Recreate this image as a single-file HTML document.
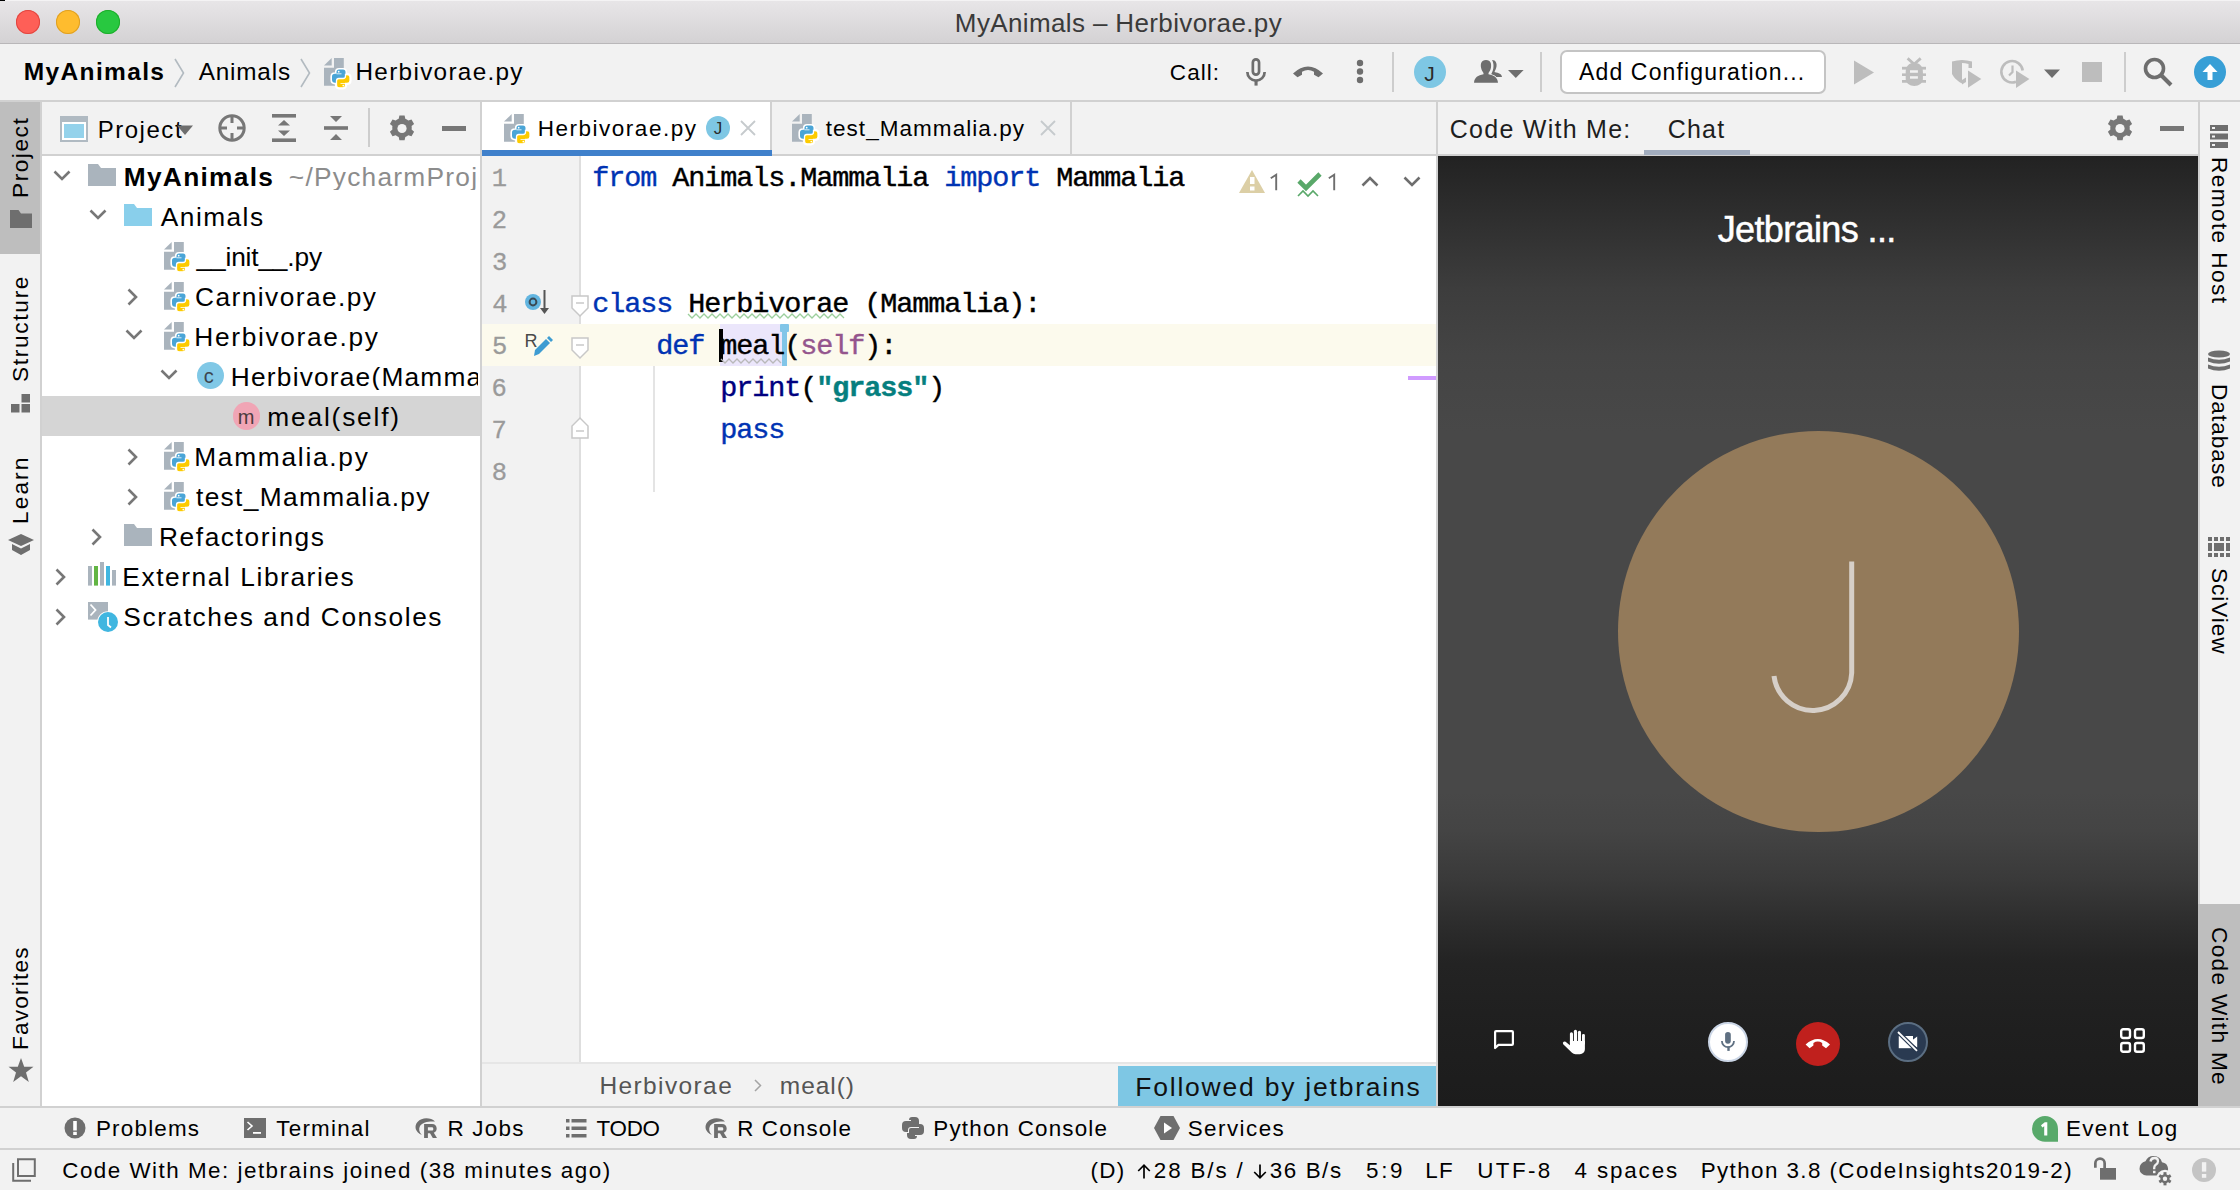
<!DOCTYPE html>
<html><head><meta charset="utf-8"><title>PyCharm</title>
<style>
html,body{margin:0;padding:0;width:2240px;height:1190px;overflow:hidden;background:#f2f2f2}
.r{position:absolute;display:block}
.t{position:absolute;white-space:pre;font-kerning:none;font-feature-settings:"liga" 0}
svg.r{overflow:visible}
</style></head><body>
<div class="r" style="left:0;top:0;width:2240px;height:43px;background:linear-gradient(#e8e6e8,#d4d2d4)"></div>
<div class="r" style="left:0px;top:43px;width:2240px;height:1px;background:#b9b7b9;"></div>
<div class="r" style="left:0px;top:0px;width:2240px;height:1px;background:#f4f3f4;"></div>
<div class="r" style="left:0px;top:0px;width:5px;height:1px;background:#000;"></div>
<div class="r" style="left:16px;top:10px;width:24px;height:24px;border-radius:50%;background:#fe5f57;box-shadow:inset 0 0 0 1px #e14640"></div>
<div class="r" style="left:56px;top:10px;width:24px;height:24px;border-radius:50%;background:#febc2e;box-shadow:inset 0 0 0 1px #dfa023"></div>
<div class="r" style="left:96px;top:10px;width:24px;height:24px;border-radius:50%;background:#28c840;box-shadow:inset 0 0 0 1px #1dad2b"></div>
<div class="t" style="left:954.87px;top:9.69px;font:26px/26px 'Liberation Sans',sans-serif;letter-spacing:0.371px;color:#3a3a3a;">MyAnimals – Herbivorae.py</div>
<div class="r" style="left:0px;top:44px;width:2240px;height:56px;background:#f2f2f2;"></div>
<div class="r" style="left:0px;top:100px;width:2240px;height:2px;background:#d1d1d1;"></div>
<div class="t" style="left:23.76px;top:60.06px;font:bold 24.5px/24.5px 'Liberation Sans',sans-serif;letter-spacing:1.363px;color:#000;">MyAnimals</div>
<svg class="r" style="left:173.5px;top:58px" width="11" height="30" viewBox="0 0 11 30"><path d="M1 1L9.5 15L1 29" fill="none" stroke="#b2bac0" stroke-width="1.6"/></svg>
<div class="t" style="left:198.75px;top:59.93px;font:24.3px/24.3px 'Liberation Sans',sans-serif;letter-spacing:0.817px;color:#000;">Animals</div>
<svg class="r" style="left:299.5px;top:58px" width="11" height="30" viewBox="0 0 11 30"><path d="M1 1L9.5 15L1 29" fill="none" stroke="#b2bac0" stroke-width="1.6"/></svg>
<svg class="r" style="left:324px;top:58px" width="28" height="31" viewBox="0 0 28 31">
<path d="M10 0H19.8V27.8H0V9.8H10Z" fill="#aab4bd"/>
<path d="M0 7.6L7.7 0V7.6Z" fill="#aab4bd"/>
<g transform="translate(8 11.5)">
<path d="M7 0H11Q13.5 0 13.5 2.5V7Q13.5 9.3 11.2 9.3H7Q4.5 9.3 4.5 11.8V13.3H3Q0 13.3 0 10.3V7Q0 4.3 3 4.3H4.5V2.5Q4.5 0 7 0Z" fill="#fff" stroke="#fff" stroke-width="3.2"/><path d="M7 0H11Q13.5 0 13.5 2.5V7Q13.5 9.3 11.2 9.3H7Q4.5 9.3 4.5 11.8V13.3H3Q0 13.3 0 10.3V7Q0 4.3 3 4.3H4.5V2.5Q4.5 0 7 0Z" transform="rotate(180 9 9.15)" fill="#fff" stroke="#fff" stroke-width="3.2"/>
<path d="M7 0H11Q13.5 0 13.5 2.5V7Q13.5 9.3 11.2 9.3H7Q4.5 9.3 4.5 11.8V13.3H3Q0 13.3 0 10.3V7Q0 4.3 3 4.3H4.5V2.5Q4.5 0 7 0Z" fill="#4aa5d7"/><path d="M4.5 4.3H9.5" stroke="#fff" stroke-width="0.8"/>
<path d="M7 0H11Q13.5 0 13.5 2.5V7Q13.5 9.3 11.2 9.3H7Q4.5 9.3 4.5 11.8V13.3H3Q0 13.3 0 10.3V7Q0 4.3 3 4.3H4.5V2.5Q4.5 0 7 0Z" transform="rotate(180 9 9.15)" fill="#fdcb00" stroke="#fff" stroke-width="1.3"/><path d="M8.5 14H13.5" stroke="#fff" stroke-width="0.8"/>
<circle cx="6.7" cy="2.2" r="0.9" fill="#fff"/><circle cx="11.3" cy="16.1" r="0.9" fill="#fff"/>
</g>
</svg>
<div class="t" style="left:355.51px;top:60.23px;font:24.3px/24.3px 'Liberation Sans',sans-serif;letter-spacing:1.314px;color:#000;">Herbivorae.py</div>
<div class="t" style="left:1169.86px;top:61.85px;font:22.5px/22.5px 'Liberation Sans',sans-serif;letter-spacing:1.047px;color:#000;">Call:</div>
<svg class="r" style="left:1244px;top:56px" width="24" height="32" viewBox="0 0 24 32"><rect x="8.85" y="3.35" width="6.2" height="15.3" rx="3.1" fill="none" stroke="#6e6e6e" stroke-width="2.7"/><path d="M3.35 16A8.65 8.65 0 0 0 20.65 16" fill="none" stroke="#6e6e6e" stroke-width="2.7"/><rect x="10.5" y="24" width="3.1" height="5.6" fill="#6e6e6e"/></svg>
<svg class="r" style="left:1292px;top:64px" width="32" height="15" viewBox="0 0 32 15"><path d="M1 9.5Q16 -4.5 31 9.5L26.5 13.2L22 10.7V7.8Q16 4 10 7.8V10.7L5.5 13.2Z" fill="#6e6e6e"/></svg>
<svg class="r" style="left:1354px;top:59px" width="12" height="26" viewBox="0 0 12 26"><circle cx="6" cy="4" r="3.2" fill="#6e6e6e"/><circle cx="6" cy="12.5" r="3.2" fill="#6e6e6e"/><circle cx="6" cy="21" r="3.2" fill="#6e6e6e"/></svg>
<div class="r" style="left:1392px;top:52px;width:2px;height:40px;background:#cdcdcd;"></div>
<div class="r" style="left:1414px;top:56px;width:32px;height:32px;border-radius:50%;background:#7ec7e4"></div>
<div class="t" style="left:1424.17px;top:62.72px;font:21px/21px 'Liberation Sans',sans-serif;letter-spacing:0.000px;color:#2b2b2b;">J</div>
<svg class="r" style="left:1472px;top:58px" width="32" height="27" viewBox="0 0 32 27"><path d="M20 2C24 2 25 5.5 24.5 8.5C24 11 23 12.5 22.5 14C27 15 29.5 16 30 18.9H24C23 17.5 21 17 19 16.5C20.5 14 21.5 11 21.5 8C21.5 5.5 21 3.5 20 2Z" fill="#6e6e6e"/><path d="M14 2C9 2 8.5 6 9 9.5C9.5 12 10.5 13.5 11.5 15L11.5 16.2C6 17.5 2.5 19 2 24.8H26C25.5 19 22 17.5 16.5 16.2V15C17.5 13.5 18.5 12 19 9.5C19.5 6 19 2 14 2Z" fill="#6e6e6e" stroke="#f2f2f2" stroke-width="1.6" paint-order="stroke"/></svg>
<svg class="r" style="left:1507px;top:69px" width="18" height="10" viewBox="0 0 18 10"><path d="M1 1H16.6L8.8 8.9Z" fill="#6e6e6e"/></svg>
<div class="r" style="left:1540px;top:52px;width:2px;height:40px;background:#cdcdcd;"></div>
<div class="r" style="left:1560px;top:50px;width:262px;height:40px;border:2px solid #c4c4c4;border-radius:7px;background:#fff"></div>
<div class="t" style="left:1578.96px;top:60.83px;font:23px/23px 'Liberation Sans',sans-serif;letter-spacing:1.150px;color:#000;">Add Configuration...</div>
<svg class="r" style="left:1853px;top:60px" width="22" height="25" viewBox="0 0 22 25"><path d="M1 0.5L21 12.5L1 24.5Z" fill="#bdbdbd"/></svg>
<svg class="r" style="left:1901px;top:57px" width="26" height="30" viewBox="0 0 26 30"><path d="M6.6 1.4L13 7M19.7 1.4L13.3 7" stroke="#bdbdbd" stroke-width="2.8"/><path d="M13.3 5.8C19 5.8 21.9 10 21.9 15V22C21.9 26 18 28.9 13.3 28.9C8.6 28.9 4.7 26 4.7 22V15C4.7 10 7.6 5.8 13.3 5.8Z" fill="#bdbdbd"/><rect x="1" y="9.8" width="24" height="2.8" fill="#bdbdbd"/><rect x="1" y="16.4" width="24" height="2.6" fill="#bdbdbd"/><rect x="1" y="23" width="24" height="2.75" fill="#bdbdbd"/><rect x="9" y="13.25" width="7.9" height="2.5" fill="#f2f2f2"/><rect x="9" y="19.2" width="7.9" height="2.5" fill="#f2f2f2"/></svg>
<svg class="r" style="left:1951px;top:59px" width="32" height="31" viewBox="0 0 32 31"><path d="M1 2.5Q6 1 11 1V24.5Q4 21 1 15Z" fill="#bdbdbd"/><path d="M11 1Q16 1 21 2.5V9H17.5V5Q14 4 11 4Z" fill="#bdbdbd"/><path d="M11 21L15 18.5V23L11 25.5Z" fill="#bdbdbd"/><path d="M17 11.6L30.3 20L17 28.75Z" fill="#bdbdbd"/></svg>
<svg class="r" style="left:2000px;top:58px" width="31" height="31" viewBox="0 0 31 31"><path d="M16 23.7A10.7 10.7 0 1 1 22.7 12.5" fill="none" stroke="#bdbdbd" stroke-width="2.6"/><path d="M12.5 7.5V14L9 17.5" fill="none" stroke="#bdbdbd" stroke-width="2.2"/><path d="M16 12.6L29.4 21L16 30Z" fill="#bdbdbd"/></svg>
<svg class="r" style="left:2044px;top:69px" width="17" height="10" viewBox="0 0 17 10"><path d="M0 0.5H16L8 9Z" fill="#6e6e6e"/></svg>
<div class="r" style="left:2082px;top:62px;width:20px;height:20px;background:#bdbdbd;"></div>
<div class="r" style="left:2124px;top:52px;width:2px;height:40px;background:#cdcdcd;"></div>
<svg class="r" style="left:2143px;top:57px" width="30" height="30" viewBox="0 0 30 30"><circle cx="11.5" cy="11.5" r="9" fill="none" stroke="#6e6e6e" stroke-width="3.6"/><path d="M18 18L28 28" stroke="#6e6e6e" stroke-width="4"/></svg>
<div class="r" style="left:2194px;top:56px;width:32px;height:32px;border-radius:50%;background:#389fd6"></div>
<svg class="r" style="left:2200px;top:62px" width="20" height="20" viewBox="0 0 20 20"><path d="M10 2L17.5 10H12.5V18H7.5V10H2.5Z" fill="#fff"/></svg>
<div class="r" style="left:0px;top:102px;width:40px;height:1006px;background:#f2f2f2;"></div>
<div class="r" style="left:40px;top:102px;width:2px;height:1006px;background:#d1d1d1;"></div>
<div class="r" style="left:0px;top:102px;width:40px;height:152px;background:#bebebe;"></div>
<div class="t" style="left:8.88px;top:198.16px;font:22.7px/22.7px 'Liberation Sans',sans-serif;letter-spacing:1.513px;color:#000;transform-origin:0 0;transform:rotate(-90deg)">Project</div>
<svg class="r" style="left:10px;top:210px" width="22" height="18" viewBox="0 0 22 18"><path d="M0 0H8.5L11 3.5H22V18H0Z" fill="#6e6e6e"/></svg>
<div class="t" style="left:8.88px;top:382.03px;font:22.7px/22.7px 'Liberation Sans',sans-serif;letter-spacing:1.680px;color:#000;transform-origin:0 0;transform:rotate(-90deg)">Structure</div>
<svg class="r" style="left:11px;top:394px" width="20" height="19" viewBox="0 0 20 19"><rect x="0" y="10" width="8.5" height="8.5" fill="#6e6e6e"/><rect x="10.5" y="10" width="8.5" height="8.5" fill="#6e6e6e"/><rect x="10.5" y="0" width="8.5" height="8.5" fill="#6e6e6e"/></svg>
<div class="t" style="left:8.88px;top:523.86px;font:22.7px/22.7px 'Liberation Sans',sans-serif;letter-spacing:2.070px;color:#000;transform-origin:0 0;transform:rotate(-90deg)">Learn</div>
<svg class="r" style="left:8px;top:534px" width="26" height="21" viewBox="0 0 26 21"><path d="M13 0L26 6L13 12L0 6Z" fill="#6e6e6e"/><path d="M4 10L13 14.5L22 10V16L13 21L4 16Z" fill="#6e6e6e"/></svg>
<div class="t" style="left:8.88px;top:1049.86px;font:22.7px/22.7px 'Liberation Sans',sans-serif;letter-spacing:1.167px;color:#000;transform-origin:0 0;transform:rotate(-90deg)">Favorites</div>
<svg class="r" style="left:8px;top:1058px" width="26" height="25" viewBox="0 0 26 25"><path d="M13 0L16.2 8.8H25.5L18 14.5L20.8 24L13 18.3L5.2 24L8 14.5L0.5 8.8H9.8Z" fill="#6e6e6e"/></svg>
<div class="r" style="left:42px;top:102px;width:438px;height:52px;background:#f2f2f2;"></div>
<div class="r" style="left:42px;top:154px;width:438px;height:2px;background:#d1d1d1;"></div>
<div class="r" style="left:42px;top:156px;width:438px;height:950px;background:#ffffff;"></div>
<div class="r" style="left:480px;top:102px;width:2px;height:1004px;background:#d1d1d1;"></div>
<svg class="r" style="left:60px;top:116px" width="28" height="26" viewBox="0 0 28 26"><rect x="0" y="0" width="28" height="26" fill="#b0bac2"/><rect x="2" y="6" width="24" height="18" fill="#fff"/><rect x="4" y="8" width="20" height="14" fill="#94d2eb"/></svg>
<div class="t" style="left:97.63px;top:117.68px;font:24px/24px 'Liberation Sans',sans-serif;letter-spacing:1.542px;color:#000;">Project</div>
<svg class="r" style="left:177px;top:125px" width="17" height="11" viewBox="0 0 17 11"><path d="M0 0.5H16L8 10Z" fill="#6e6e6e"/></svg>
<svg class="r" style="left:218px;top:114px" width="28" height="28" viewBox="0 0 28 28"><circle cx="14" cy="14" r="12.2" fill="none" stroke="#777" stroke-width="3"/><path d="M14 1V9M14 19V27M1 14H9M19 14H27" stroke="#777" stroke-width="3"/></svg>
<svg class="r" style="left:272px;top:114px" width="24" height="28" viewBox="0 0 24 28"><rect x="0" y="0" width="24" height="3.6" fill="#777"/><rect x="0" y="24.4" width="24" height="3.6" fill="#777"/><path d="M12 6L18 11.5H6Z M12 22L18 16.5H6Z" fill="#777"/></svg>
<svg class="r" style="left:324px;top:116px" width="24" height="24" viewBox="0 0 24 24"><rect x="0" y="10.2" width="24" height="3.6" fill="#777"/><path d="M6 0H18L12 6Z M6 24H18L12 18Z" fill="#777"/></svg>
<div class="r" style="left:368px;top:108px;width:2px;height:39px;background:#cdcdcd;"></div>
<svg class="r" style="left:389px;top:115px" width="26" height="27" viewBox="0 0 26 27"><g transform="translate(13 13.5)"><path d="M-2.6 -13h5.2l0.7 3.3a10 10 0 0 1 3 1.7l3.2-1.1 2.6 4.5-2.5 2.2a10 10 0 0 1 0 3.5l2.5 2.2-2.6 4.5-3.2-1.1a10 10 0 0 1-3 1.7l-0.7 3.3h-5.2l-0.7-3.3a10 10 0 0 1-3-1.7l-3.2 1.1-2.6-4.5 2.5-2.2a10 10 0 0 1 0-3.5l-2.5-2.2 2.6-4.5 3.2 1.1a10 10 0 0 1 3-1.7z" fill="#777"/><circle r="4.6" fill="#f2f2f2"/></g></svg>
<div class="r" style="left:442px;top:126px;width:24px;height:4.5px;background:#777;"></div>
<svg class="r" style="left:52.5px;top:169.5px" width="18" height="11" viewBox="0 0 18 11"><path d="M1.5 1.5L9 9L16.5 1.5" fill="none" stroke="#777" stroke-width="2.6"/></svg>
<svg class="r" style="left:88px;top:164px" width="28" height="22" viewBox="0 0 28 22"><path d="M0 0H10L13 4H28V22H0Z" fill="#aab4bd"/></svg>
<div class="t" style="left:123.74px;top:163.74px;font:bold 26.3px/26.3px 'Liberation Sans',sans-serif;letter-spacing:1.299px;color:#000;">MyAnimals</div>
<div class="t" style="left:288.82px;top:163.74px;font:26.3px/26.3px 'Liberation Sans',sans-serif;letter-spacing:1.250px;color:#8c8c8c;width:190px;overflow:hidden;">~/PycharmProjects/MyAnimals</div>
<svg class="r" style="left:88.5px;top:209px" width="18" height="11" viewBox="0 0 18 11"><path d="M1.5 1.5L9 9L16.5 1.5" fill="none" stroke="#777" stroke-width="2.6"/></svg>
<svg class="r" style="left:124px;top:204px" width="28" height="22" viewBox="0 0 28 22"><path d="M0 0H10L13 4H28V22H0Z" fill="#89cfeb"/></svg>
<div class="t" style="left:160.85px;top:203.74px;font:26.3px/26.3px 'Liberation Sans',sans-serif;letter-spacing:1.444px;color:#000;">Animals</div>
<svg class="r" style="left:164px;top:242px" width="28" height="31" viewBox="0 0 28 31">
<path d="M10 0H19.8V27.8H0V9.8H10Z" fill="#aab4bd"/>
<path d="M0 7.6L7.7 0V7.6Z" fill="#aab4bd"/>
<g transform="translate(8 11.5)">
<path d="M7 0H11Q13.5 0 13.5 2.5V7Q13.5 9.3 11.2 9.3H7Q4.5 9.3 4.5 11.8V13.3H3Q0 13.3 0 10.3V7Q0 4.3 3 4.3H4.5V2.5Q4.5 0 7 0Z" fill="#fff" stroke="#fff" stroke-width="3.2"/><path d="M7 0H11Q13.5 0 13.5 2.5V7Q13.5 9.3 11.2 9.3H7Q4.5 9.3 4.5 11.8V13.3H3Q0 13.3 0 10.3V7Q0 4.3 3 4.3H4.5V2.5Q4.5 0 7 0Z" transform="rotate(180 9 9.15)" fill="#fff" stroke="#fff" stroke-width="3.2"/>
<path d="M7 0H11Q13.5 0 13.5 2.5V7Q13.5 9.3 11.2 9.3H7Q4.5 9.3 4.5 11.8V13.3H3Q0 13.3 0 10.3V7Q0 4.3 3 4.3H4.5V2.5Q4.5 0 7 0Z" fill="#4aa5d7"/><path d="M4.5 4.3H9.5" stroke="#fff" stroke-width="0.8"/>
<path d="M7 0H11Q13.5 0 13.5 2.5V7Q13.5 9.3 11.2 9.3H7Q4.5 9.3 4.5 11.8V13.3H3Q0 13.3 0 10.3V7Q0 4.3 3 4.3H4.5V2.5Q4.5 0 7 0Z" transform="rotate(180 9 9.15)" fill="#fdcb00" stroke="#fff" stroke-width="1.3"/><path d="M8.5 14H13.5" stroke="#fff" stroke-width="0.8"/>
<circle cx="6.7" cy="2.2" r="0.9" fill="#fff"/><circle cx="11.3" cy="16.1" r="0.9" fill="#fff"/>
</g>
</svg>
<div class="t" style="left:196.60px;top:243.74px;font:26.3px/26.3px 'Liberation Sans',sans-serif;letter-spacing:-0.176px;color:#000;">__init__.py</div>
<svg class="r" style="left:126.5px;top:288px" width="11" height="18" viewBox="0 0 11 18"><path d="M1.5 1.5L9 9L1.5 16.5" fill="none" stroke="#777" stroke-width="2.6"/></svg>
<svg class="r" style="left:164px;top:282px" width="28" height="31" viewBox="0 0 28 31">
<path d="M10 0H19.8V27.8H0V9.8H10Z" fill="#aab4bd"/>
<path d="M0 7.6L7.7 0V7.6Z" fill="#aab4bd"/>
<g transform="translate(8 11.5)">
<path d="M7 0H11Q13.5 0 13.5 2.5V7Q13.5 9.3 11.2 9.3H7Q4.5 9.3 4.5 11.8V13.3H3Q0 13.3 0 10.3V7Q0 4.3 3 4.3H4.5V2.5Q4.5 0 7 0Z" fill="#fff" stroke="#fff" stroke-width="3.2"/><path d="M7 0H11Q13.5 0 13.5 2.5V7Q13.5 9.3 11.2 9.3H7Q4.5 9.3 4.5 11.8V13.3H3Q0 13.3 0 10.3V7Q0 4.3 3 4.3H4.5V2.5Q4.5 0 7 0Z" transform="rotate(180 9 9.15)" fill="#fff" stroke="#fff" stroke-width="3.2"/>
<path d="M7 0H11Q13.5 0 13.5 2.5V7Q13.5 9.3 11.2 9.3H7Q4.5 9.3 4.5 11.8V13.3H3Q0 13.3 0 10.3V7Q0 4.3 3 4.3H4.5V2.5Q4.5 0 7 0Z" fill="#4aa5d7"/><path d="M4.5 4.3H9.5" stroke="#fff" stroke-width="0.8"/>
<path d="M7 0H11Q13.5 0 13.5 2.5V7Q13.5 9.3 11.2 9.3H7Q4.5 9.3 4.5 11.8V13.3H3Q0 13.3 0 10.3V7Q0 4.3 3 4.3H4.5V2.5Q4.5 0 7 0Z" transform="rotate(180 9 9.15)" fill="#fdcb00" stroke="#fff" stroke-width="1.3"/><path d="M8.5 14H13.5" stroke="#fff" stroke-width="0.8"/>
<circle cx="6.7" cy="2.2" r="0.9" fill="#fff"/><circle cx="11.3" cy="16.1" r="0.9" fill="#fff"/>
</g>
</svg>
<div class="t" style="left:195.06px;top:283.74px;font:26.3px/26.3px 'Liberation Sans',sans-serif;letter-spacing:1.439px;color:#000;">Carnivorae.py</div>
<svg class="r" style="left:124.5px;top:329px" width="18" height="11" viewBox="0 0 18 11"><path d="M1.5 1.5L9 9L16.5 1.5" fill="none" stroke="#777" stroke-width="2.6"/></svg>
<svg class="r" style="left:164px;top:322px" width="28" height="31" viewBox="0 0 28 31">
<path d="M10 0H19.8V27.8H0V9.8H10Z" fill="#aab4bd"/>
<path d="M0 7.6L7.7 0V7.6Z" fill="#aab4bd"/>
<g transform="translate(8 11.5)">
<path d="M7 0H11Q13.5 0 13.5 2.5V7Q13.5 9.3 11.2 9.3H7Q4.5 9.3 4.5 11.8V13.3H3Q0 13.3 0 10.3V7Q0 4.3 3 4.3H4.5V2.5Q4.5 0 7 0Z" fill="#fff" stroke="#fff" stroke-width="3.2"/><path d="M7 0H11Q13.5 0 13.5 2.5V7Q13.5 9.3 11.2 9.3H7Q4.5 9.3 4.5 11.8V13.3H3Q0 13.3 0 10.3V7Q0 4.3 3 4.3H4.5V2.5Q4.5 0 7 0Z" transform="rotate(180 9 9.15)" fill="#fff" stroke="#fff" stroke-width="3.2"/>
<path d="M7 0H11Q13.5 0 13.5 2.5V7Q13.5 9.3 11.2 9.3H7Q4.5 9.3 4.5 11.8V13.3H3Q0 13.3 0 10.3V7Q0 4.3 3 4.3H4.5V2.5Q4.5 0 7 0Z" fill="#4aa5d7"/><path d="M4.5 4.3H9.5" stroke="#fff" stroke-width="0.8"/>
<path d="M7 0H11Q13.5 0 13.5 2.5V7Q13.5 9.3 11.2 9.3H7Q4.5 9.3 4.5 11.8V13.3H3Q0 13.3 0 10.3V7Q0 4.3 3 4.3H4.5V2.5Q4.5 0 7 0Z" transform="rotate(180 9 9.15)" fill="#fdcb00" stroke="#fff" stroke-width="1.3"/><path d="M8.5 14H13.5" stroke="#fff" stroke-width="0.8"/>
<circle cx="6.7" cy="2.2" r="0.9" fill="#fff"/><circle cx="11.3" cy="16.1" r="0.9" fill="#fff"/>
</g>
</svg>
<div class="t" style="left:194.24px;top:323.74px;font:26.3px/26.3px 'Liberation Sans',sans-serif;letter-spacing:1.674px;color:#000;">Herbivorae.py</div>
<svg class="r" style="left:160px;top:369px" width="18" height="11" viewBox="0 0 18 11"><path d="M1.5 1.5L9 9L16.5 1.5" fill="none" stroke="#777" stroke-width="2.6"/></svg>
<div class="r" style="left:196.5px;top:362px;width:27px;height:27px;border-radius:50%;background:#80c8e6"></div>
<div class="t" style="left:203.65px;top:366.07px;font:20px/20px 'Liberation Sans',sans-serif;letter-spacing:0.000px;color:#3c4750;">c</div>
<div class="t" style="left:230.84px;top:363.74px;font:26.3px/26.3px 'Liberation Sans',sans-serif;letter-spacing:1.200px;color:#000;width:247px;overflow:hidden;">Herbivorae(Mammalia)</div>
<div class="r" style="left:42px;top:396px;width:438px;height:40px;background:#d5d5d5;"></div>
<div class="r" style="left:232.5px;top:402px;width:27.5px;height:27.5px;border-radius:50%;background:#f0a5b5"></div>
<div class="t" style="left:237.67px;top:406.57px;font:20px/20px 'Liberation Sans',sans-serif;letter-spacing:0.000px;color:#4a3a3d;">m</div>
<div class="t" style="left:267.25px;top:403.74px;font:26.3px/26.3px 'Liberation Sans',sans-serif;letter-spacing:1.826px;color:#000;">meal(self)</div>
<svg class="r" style="left:126.5px;top:448px" width="11" height="18" viewBox="0 0 11 18"><path d="M1.5 1.5L9 9L1.5 16.5" fill="none" stroke="#777" stroke-width="2.6"/></svg>
<svg class="r" style="left:164px;top:442px" width="28" height="31" viewBox="0 0 28 31">
<path d="M10 0H19.8V27.8H0V9.8H10Z" fill="#aab4bd"/>
<path d="M0 7.6L7.7 0V7.6Z" fill="#aab4bd"/>
<g transform="translate(8 11.5)">
<path d="M7 0H11Q13.5 0 13.5 2.5V7Q13.5 9.3 11.2 9.3H7Q4.5 9.3 4.5 11.8V13.3H3Q0 13.3 0 10.3V7Q0 4.3 3 4.3H4.5V2.5Q4.5 0 7 0Z" fill="#fff" stroke="#fff" stroke-width="3.2"/><path d="M7 0H11Q13.5 0 13.5 2.5V7Q13.5 9.3 11.2 9.3H7Q4.5 9.3 4.5 11.8V13.3H3Q0 13.3 0 10.3V7Q0 4.3 3 4.3H4.5V2.5Q4.5 0 7 0Z" transform="rotate(180 9 9.15)" fill="#fff" stroke="#fff" stroke-width="3.2"/>
<path d="M7 0H11Q13.5 0 13.5 2.5V7Q13.5 9.3 11.2 9.3H7Q4.5 9.3 4.5 11.8V13.3H3Q0 13.3 0 10.3V7Q0 4.3 3 4.3H4.5V2.5Q4.5 0 7 0Z" fill="#4aa5d7"/><path d="M4.5 4.3H9.5" stroke="#fff" stroke-width="0.8"/>
<path d="M7 0H11Q13.5 0 13.5 2.5V7Q13.5 9.3 11.2 9.3H7Q4.5 9.3 4.5 11.8V13.3H3Q0 13.3 0 10.3V7Q0 4.3 3 4.3H4.5V2.5Q4.5 0 7 0Z" transform="rotate(180 9 9.15)" fill="#fdcb00" stroke="#fff" stroke-width="1.3"/><path d="M8.5 14H13.5" stroke="#fff" stroke-width="0.8"/>
<circle cx="6.7" cy="2.2" r="0.9" fill="#fff"/><circle cx="11.3" cy="16.1" r="0.9" fill="#fff"/>
</g>
</svg>
<div class="t" style="left:194.24px;top:443.74px;font:26.3px/26.3px 'Liberation Sans',sans-serif;letter-spacing:1.723px;color:#000;">Mammalia.py</div>
<svg class="r" style="left:126.5px;top:488px" width="11" height="18" viewBox="0 0 11 18"><path d="M1.5 1.5L9 9L1.5 16.5" fill="none" stroke="#777" stroke-width="2.6"/></svg>
<svg class="r" style="left:164px;top:482px" width="28" height="31" viewBox="0 0 28 31">
<path d="M10 0H19.8V27.8H0V9.8H10Z" fill="#aab4bd"/>
<path d="M0 7.6L7.7 0V7.6Z" fill="#aab4bd"/>
<g transform="translate(8 11.5)">
<path d="M7 0H11Q13.5 0 13.5 2.5V7Q13.5 9.3 11.2 9.3H7Q4.5 9.3 4.5 11.8V13.3H3Q0 13.3 0 10.3V7Q0 4.3 3 4.3H4.5V2.5Q4.5 0 7 0Z" fill="#fff" stroke="#fff" stroke-width="3.2"/><path d="M7 0H11Q13.5 0 13.5 2.5V7Q13.5 9.3 11.2 9.3H7Q4.5 9.3 4.5 11.8V13.3H3Q0 13.3 0 10.3V7Q0 4.3 3 4.3H4.5V2.5Q4.5 0 7 0Z" transform="rotate(180 9 9.15)" fill="#fff" stroke="#fff" stroke-width="3.2"/>
<path d="M7 0H11Q13.5 0 13.5 2.5V7Q13.5 9.3 11.2 9.3H7Q4.5 9.3 4.5 11.8V13.3H3Q0 13.3 0 10.3V7Q0 4.3 3 4.3H4.5V2.5Q4.5 0 7 0Z" fill="#4aa5d7"/><path d="M4.5 4.3H9.5" stroke="#fff" stroke-width="0.8"/>
<path d="M7 0H11Q13.5 0 13.5 2.5V7Q13.5 9.3 11.2 9.3H7Q4.5 9.3 4.5 11.8V13.3H3Q0 13.3 0 10.3V7Q0 4.3 3 4.3H4.5V2.5Q4.5 0 7 0Z" transform="rotate(180 9 9.15)" fill="#fdcb00" stroke="#fff" stroke-width="1.3"/><path d="M8.5 14H13.5" stroke="#fff" stroke-width="0.8"/>
<circle cx="6.7" cy="2.2" r="0.9" fill="#fff"/><circle cx="11.3" cy="16.1" r="0.9" fill="#fff"/>
</g>
</svg>
<div class="t" style="left:196.00px;top:483.74px;font:26.3px/26.3px 'Liberation Sans',sans-serif;letter-spacing:1.337px;color:#000;">test_Mammalia.py</div>
<svg class="r" style="left:90.5px;top:528px" width="11" height="18" viewBox="0 0 11 18"><path d="M1.5 1.5L9 9L1.5 16.5" fill="none" stroke="#777" stroke-width="2.6"/></svg>
<svg class="r" style="left:124px;top:524px" width="28" height="22" viewBox="0 0 28 22"><path d="M0 0H10L13 4H28V22H0Z" fill="#aab4bd"/></svg>
<div class="t" style="left:159.04px;top:523.74px;font:26.3px/26.3px 'Liberation Sans',sans-serif;letter-spacing:1.570px;color:#000;">Refactorings</div>
<svg class="r" style="left:54.5px;top:568px" width="11" height="18" viewBox="0 0 11 18"><path d="M1.5 1.5L9 9L1.5 16.5" fill="none" stroke="#777" stroke-width="2.6"/></svg>
<svg class="r" style="left:88px;top:562px" width="28" height="24" viewBox="0 0 28 24"><rect x="0" y="4" width="4" height="19.6" fill="#aab4bd"/><rect x="6" y="4" width="4" height="19.6" fill="#62b543"/><rect x="12" y="0" width="4" height="23.6" fill="#aab4bd"/><rect x="18" y="4" width="4" height="19.6" fill="#40b6e0"/><rect x="24" y="8" width="4" height="15.6" fill="#aab4bd"/></svg>
<div class="t" style="left:122.34px;top:563.74px;font:26.3px/26.3px 'Liberation Sans',sans-serif;letter-spacing:1.574px;color:#000;">External Libraries</div>
<svg class="r" style="left:54.5px;top:608px" width="11" height="18" viewBox="0 0 11 18"><path d="M1.5 1.5L9 9L1.5 16.5" fill="none" stroke="#777" stroke-width="2.6"/></svg>
<svg class="r" style="left:88px;top:601px" width="32" height="33" viewBox="0 0 32 33"><path d="M0 1H20V18.6H0Z" fill="#aab4bd"/><path d="M2.5 3.5L7.5 9L2.5 14.5" fill="none" stroke="#fff" stroke-width="1.8"/><circle cx="20" cy="21" r="10" fill="#40b6e0" stroke="#fff" stroke-width="1.6" paint-order="stroke"/><path d="M20 16V24L23 26.5" fill="none" stroke="#fff" stroke-width="1.8"/></svg>
<div class="t" style="left:123.31px;top:603.74px;font:26.3px/26.3px 'Liberation Sans',sans-serif;letter-spacing:1.580px;color:#000;">Scratches and Consoles</div>
<div class="r" style="left:482px;top:102px;width:954px;height:52px;background:#f2f2f2;"></div>
<div class="r" style="left:482px;top:154px;width:954px;height:2px;background:#d1d1d1;"></div>
<div class="r" style="left:482px;top:102px;width:288px;height:53px;background:#ffffff;"></div>
<div class="r" style="left:770px;top:102px;width:2px;height:53px;background:#d1d1d1;"></div>
<div class="r" style="left:482px;top:150px;width:290px;height:5.5px;background:#3f80cb;"></div>
<svg class="r" style="left:504px;top:114px" width="28" height="31" viewBox="0 0 28 31">
<path d="M10 0H19.8V27.8H0V9.8H10Z" fill="#aab4bd"/>
<path d="M0 7.6L7.7 0V7.6Z" fill="#aab4bd"/>
<g transform="translate(8 11.5)">
<path d="M7 0H11Q13.5 0 13.5 2.5V7Q13.5 9.3 11.2 9.3H7Q4.5 9.3 4.5 11.8V13.3H3Q0 13.3 0 10.3V7Q0 4.3 3 4.3H4.5V2.5Q4.5 0 7 0Z" fill="#fff" stroke="#fff" stroke-width="3.2"/><path d="M7 0H11Q13.5 0 13.5 2.5V7Q13.5 9.3 11.2 9.3H7Q4.5 9.3 4.5 11.8V13.3H3Q0 13.3 0 10.3V7Q0 4.3 3 4.3H4.5V2.5Q4.5 0 7 0Z" transform="rotate(180 9 9.15)" fill="#fff" stroke="#fff" stroke-width="3.2"/>
<path d="M7 0H11Q13.5 0 13.5 2.5V7Q13.5 9.3 11.2 9.3H7Q4.5 9.3 4.5 11.8V13.3H3Q0 13.3 0 10.3V7Q0 4.3 3 4.3H4.5V2.5Q4.5 0 7 0Z" fill="#4aa5d7"/><path d="M4.5 4.3H9.5" stroke="#fff" stroke-width="0.8"/>
<path d="M7 0H11Q13.5 0 13.5 2.5V7Q13.5 9.3 11.2 9.3H7Q4.5 9.3 4.5 11.8V13.3H3Q0 13.3 0 10.3V7Q0 4.3 3 4.3H4.5V2.5Q4.5 0 7 0Z" transform="rotate(180 9 9.15)" fill="#fdcb00" stroke="#fff" stroke-width="1.3"/><path d="M8.5 14H13.5" stroke="#fff" stroke-width="0.8"/>
<circle cx="6.7" cy="2.2" r="0.9" fill="#fff"/><circle cx="11.3" cy="16.1" r="0.9" fill="#fff"/>
</g>
</svg>
<div class="t" style="left:537.75px;top:117.95px;font:22.5px/22.5px 'Liberation Sans',sans-serif;letter-spacing:1.510px;color:#000;">Herbivorae.py</div>
<div class="r" style="left:706px;top:116px;width:24px;height:24px;border-radius:50%;background:#7ec7e4"></div>
<div class="t" style="left:713.73px;top:119.61px;font:17px/17px 'Liberation Sans',sans-serif;letter-spacing:0.000px;color:#2b2b2b;">J</div>
<svg class="r" style="left:740px;top:120px" width="16" height="16" viewBox="0 0 16 16"><path d="M1 1L15 15M15 1L1 15" stroke="#c6cacd" stroke-width="1.8"/></svg>
<svg class="r" style="left:792px;top:114px" width="28" height="31" viewBox="0 0 28 31">
<path d="M10 0H19.8V27.8H0V9.8H10Z" fill="#aab4bd"/>
<path d="M0 7.6L7.7 0V7.6Z" fill="#aab4bd"/>
<g transform="translate(8 11.5)">
<path d="M7 0H11Q13.5 0 13.5 2.5V7Q13.5 9.3 11.2 9.3H7Q4.5 9.3 4.5 11.8V13.3H3Q0 13.3 0 10.3V7Q0 4.3 3 4.3H4.5V2.5Q4.5 0 7 0Z" fill="#fff" stroke="#fff" stroke-width="3.2"/><path d="M7 0H11Q13.5 0 13.5 2.5V7Q13.5 9.3 11.2 9.3H7Q4.5 9.3 4.5 11.8V13.3H3Q0 13.3 0 10.3V7Q0 4.3 3 4.3H4.5V2.5Q4.5 0 7 0Z" transform="rotate(180 9 9.15)" fill="#fff" stroke="#fff" stroke-width="3.2"/>
<path d="M7 0H11Q13.5 0 13.5 2.5V7Q13.5 9.3 11.2 9.3H7Q4.5 9.3 4.5 11.8V13.3H3Q0 13.3 0 10.3V7Q0 4.3 3 4.3H4.5V2.5Q4.5 0 7 0Z" fill="#4aa5d7"/><path d="M4.5 4.3H9.5" stroke="#fff" stroke-width="0.8"/>
<path d="M7 0H11Q13.5 0 13.5 2.5V7Q13.5 9.3 11.2 9.3H7Q4.5 9.3 4.5 11.8V13.3H3Q0 13.3 0 10.3V7Q0 4.3 3 4.3H4.5V2.5Q4.5 0 7 0Z" transform="rotate(180 9 9.15)" fill="#fdcb00" stroke="#fff" stroke-width="1.3"/><path d="M8.5 14H13.5" stroke="#fff" stroke-width="0.8"/>
<circle cx="6.7" cy="2.2" r="0.9" fill="#fff"/><circle cx="11.3" cy="16.1" r="0.9" fill="#fff"/>
</g>
</svg>
<div class="t" style="left:825.66px;top:117.95px;font:22.5px/22.5px 'Liberation Sans',sans-serif;letter-spacing:1.055px;color:#000;">test_Mammalia.py</div>
<svg class="r" style="left:1040px;top:120px" width="16" height="16" viewBox="0 0 16 16"><path d="M1 1L15 15M15 1L1 15" stroke="#c6cacd" stroke-width="1.8"/></svg>
<div class="r" style="left:1070px;top:102px;width:2px;height:53px;background:#d1d1d1;"></div>
<div class="r" style="left:482px;top:156px;width:954px;height:907px;background:#ffffff;"></div>
<div class="r" style="left:482px;top:156px;width:97px;height:907px;background:#f2f2f2;"></div>
<div class="r" style="left:579px;top:156px;width:2px;height:907px;background:#dedede;"></div>
<div class="r" style="left:482px;top:324px;width:954px;height:42px;background:#fcfaed;"></div>
<div class="r" style="left:720px;top:324px;width:62.5px;height:42px;background:#ebe6fb;"></div>
<div class="r" style="left:781.5px;top:324px;width:5px;height:42px;background:#81c5e8;"></div>
<div class="r" style="left:779.5px;top:324px;width:9px;height:8px;background:#81c5e8;border-radius:1px"></div>
<div class="t" style="left:491.66px;top:167.46px;font:25.5px/25.5px 'Liberation Mono',monospace;letter-spacing:0.000px;color:#9a9a9a;-webkit-text-stroke:0.3px #9a9a9a;">1</div>
<div class="t" style="left:491.71px;top:209.46px;font:25.5px/25.5px 'Liberation Mono',monospace;letter-spacing:0.000px;color:#9a9a9a;-webkit-text-stroke:0.3px #9a9a9a;">2</div>
<div class="t" style="left:491.91px;top:251.46px;font:25.5px/25.5px 'Liberation Mono',monospace;letter-spacing:0.000px;color:#9a9a9a;-webkit-text-stroke:0.3px #9a9a9a;">3</div>
<div class="t" style="left:492.22px;top:293.46px;font:25.5px/25.5px 'Liberation Mono',monospace;letter-spacing:0.000px;color:#9a9a9a;-webkit-text-stroke:0.3px #9a9a9a;">4</div>
<div class="t" style="left:491.91px;top:335.46px;font:25.5px/25.5px 'Liberation Mono',monospace;letter-spacing:0.000px;color:#9a9a9a;-webkit-text-stroke:0.3px #9a9a9a;">5</div>
<div class="t" style="left:491.62px;top:377.46px;font:25.5px/25.5px 'Liberation Mono',monospace;letter-spacing:0.000px;color:#9a9a9a;-webkit-text-stroke:0.3px #9a9a9a;">6</div>
<div class="t" style="left:491.53px;top:419.46px;font:25.5px/25.5px 'Liberation Mono',monospace;letter-spacing:0.000px;color:#9a9a9a;-webkit-text-stroke:0.3px #9a9a9a;">7</div>
<div class="t" style="left:491.84px;top:461.46px;font:25.5px/25.5px 'Liberation Mono',monospace;letter-spacing:0.000px;color:#9a9a9a;-webkit-text-stroke:0.3px #9a9a9a;">8</div>
<div class="t" style="left:592.20px;top:164.97px;font:28.5px/28.5px 'Liberation Mono',monospace;letter-spacing:-1.103px;color:#0033b3;-webkit-text-stroke:0.4px #0033b3">from</div>
<div class="t" style="left:672.20px;top:164.97px;font:28.5px/28.5px 'Liberation Mono',monospace;letter-spacing:-1.103px;color:#000;-webkit-text-stroke:0.4px #000">Animals.Mammalia</div>
<div class="t" style="left:944.20px;top:164.97px;font:28.5px/28.5px 'Liberation Mono',monospace;letter-spacing:-1.103px;color:#0033b3;-webkit-text-stroke:0.4px #0033b3">import</div>
<div class="t" style="left:1056.20px;top:164.97px;font:28.5px/28.5px 'Liberation Mono',monospace;letter-spacing:-1.103px;color:#000;-webkit-text-stroke:0.4px #000">Mammalia</div>
<div class="t" style="left:592.20px;top:290.97px;font:28.5px/28.5px 'Liberation Mono',monospace;letter-spacing:-1.103px;color:#0033b3;-webkit-text-stroke:0.4px #0033b3">class</div>
<div class="t" style="left:688.20px;top:290.97px;font:28.5px/28.5px 'Liberation Mono',monospace;letter-spacing:-1.103px;color:#000;-webkit-text-stroke:0.4px #000">Herbivorae (Mammalia):</div>
<div class="t" style="left:656.20px;top:332.97px;font:28.5px/28.5px 'Liberation Mono',monospace;letter-spacing:-1.103px;color:#0033b3;-webkit-text-stroke:0.4px #0033b3">def</div>
<div class="t" style="left:720.20px;top:332.97px;font:28.5px/28.5px 'Liberation Mono',monospace;letter-spacing:-1.103px;color:#000;-webkit-text-stroke:0.4px #000">meal</div>
<div class="t" style="left:784.20px;top:332.97px;font:28.5px/28.5px 'Liberation Mono',monospace;letter-spacing:-1.103px;color:#000;-webkit-text-stroke:0.4px #000">(</div>
<div class="t" style="left:800.20px;top:332.97px;font:28.5px/28.5px 'Liberation Mono',monospace;letter-spacing:-1.103px;color:#94558d;-webkit-text-stroke:0.4px #94558d">self</div>
<div class="t" style="left:864.20px;top:332.97px;font:28.5px/28.5px 'Liberation Mono',monospace;letter-spacing:-1.103px;color:#000;-webkit-text-stroke:0.4px #000">):</div>
<div class="t" style="left:720.20px;top:374.97px;font:28.5px/28.5px 'Liberation Mono',monospace;letter-spacing:-1.103px;color:#000080;-webkit-text-stroke:0.4px #000080">print</div>
<div class="t" style="left:800.20px;top:374.97px;font:28.5px/28.5px 'Liberation Mono',monospace;letter-spacing:-1.103px;color:#000;-webkit-text-stroke:0.4px #000">(</div>
<div class="t" style="left:816.20px;top:374.97px;font:bold 28.5px/28.5px 'Liberation Mono',monospace;letter-spacing:-1.103px;color:#067f7f;-webkit-text-stroke:0.4px #067f7f">"grass"</div>
<div class="t" style="left:928.20px;top:374.97px;font:28.5px/28.5px 'Liberation Mono',monospace;letter-spacing:-1.103px;color:#000;-webkit-text-stroke:0.4px #000">)</div>
<div class="t" style="left:720.20px;top:416.97px;font:28.5px/28.5px 'Liberation Mono',monospace;letter-spacing:-1.103px;color:#0033b3;-webkit-text-stroke:0.4px #0033b3">pass</div>
<div class="r" style="left:719px;top:328.5px;width:4px;height:33px;background:#000;"></div>
<svg class="r" style="left:688px;top:313px" width="161" height="6" viewBox="0 0 161 6"><polyline points="0.0,0 4.0,4 8.0,0 12.0,4 16.0,0 20.0,4 24.0,0 28.0,4 32.0,0 36.0,4 40.0,0 44.0,4 48.0,0 52.0,4 56.0,0 60.0,4 64.0,0 68.0,4 72.0,0 76.0,4 80.0,0 84.0,4 88.0,0 92.0,4 96.0,0 100.0,4 104.0,0 108.0,4 112.0,0 116.0,4 120.0,0 124.0,4 128.0,0 132.0,4 136.0,0 140.0,4 144.0,0 148.0,4 152.0,0 156.0,4" transform="translate(0 1)" fill="none" stroke="#9ccf9c" stroke-width="1.3"/></svg>
<svg class="r" style="left:721px;top:358px" width="62" height="6" viewBox="0 0 62 6"><polyline points="0.0,0 4.0,4 8.0,0 12.0,4 16.0,0 20.0,4 24.0,0 28.0,4 32.0,0 36.0,4 40.0,0 44.0,4 48.0,0 52.0,4 56.0,0 60.0,4" transform="translate(0 1)" fill="none" stroke="#b8b8b8" stroke-width="1.3"/></svg>
<div class="r" style="left:653px;top:366px;width:2px;height:126px;background:#e4e4e4;"></div>
<svg class="r" style="left:524px;top:290px" width="26" height="25" viewBox="0 0 26 25"><circle cx="9" cy="12" r="8" fill="#62b5e0"/><circle cx="9" cy="12" r="3.4" fill="none" stroke="#3a4a55" stroke-width="2"/><path d="M20.5 0V21" stroke="#555" stroke-width="2"/><path d="M16 18L20.5 24L25 18Z" fill="#555"/></svg>
<div class="t" style="left:524.52px;top:331.76px;font:18px/18px 'Liberation Sans',sans-serif;letter-spacing:0.000px;color:#4a4a4a;">R</div>
<svg class="r" style="left:532px;top:336px" width="20" height="21" viewBox="0 0 20 21"><path d="M3 14L14 3L18 7L7 18L2 20Z" fill="#3d9cd2"/><path d="M15 2L17 0L21 4L19 6Z" fill="#3d9cd2"/></svg>
<svg class="r" style="left:571px;top:295px" width="18" height="22" viewBox="0 0 18 22"><path d="M1 1H17V13L9 21L1 13Z" fill="#fff" stroke="#c8c8c8" stroke-width="1.5"/><path d="M5 8H13" stroke="#c8c8c8" stroke-width="1.5"/></svg>
<svg class="r" style="left:571px;top:337px" width="18" height="22" viewBox="0 0 18 22"><path d="M1 1H17V13L9 21L1 13Z" fill="#fff" stroke="#c8c8c8" stroke-width="1.5"/><path d="M5 8H13" stroke="#c8c8c8" stroke-width="1.5"/></svg>
<svg class="r" style="left:571px;top:417px" width="18" height="22" viewBox="0 0 18 22"><path d="M1 21H17V9L9 1L1 9Z" fill="#fff" stroke="#c8c8c8" stroke-width="1.5"/><path d="M5 14H13" stroke="#c8c8c8" stroke-width="1.5"/></svg>
<svg class="r" style="left:1239px;top:170px" width="26" height="23" viewBox="0 0 26 23"><path d="M13 0L26 23H0Z" fill="#dccfa6"/><rect x="11" y="7" width="4.5" height="7" fill="#fff"/><rect x="11" y="16.5" width="4.5" height="4" fill="#fff"/></svg>
<svg class="r" style="left:1270px;top:174px" width="10" height="17" viewBox="0 0 10 17"><path d="M0.8 4.2L6.2 0.8V16.3" fill="none" stroke="#6e6e6e" stroke-width="1.9"/></svg>
<svg class="r" style="left:1297px;top:172px" width="26" height="25" viewBox="0 0 26 25"><path d="M2 9L9 16L23 2" fill="none" stroke="#59a869" stroke-width="4.6"/><path d="M1 24L6 19L11 24L16 19L21 24" fill="none" stroke="#59a869" stroke-width="1.6"/></svg>
<svg class="r" style="left:1328px;top:174px" width="10" height="17" viewBox="0 0 10 17"><path d="M0.8 4.2L6.2 0.8V16.3" fill="none" stroke="#6e6e6e" stroke-width="1.9"/></svg>
<svg class="r" style="left:1361px;top:175px" width="18" height="12" viewBox="0 0 18 12"><path d="M1.5 10.5L9 3L16.5 10.5" fill="none" stroke="#6e6e6e" stroke-width="2.6"/></svg>
<svg class="r" style="left:1403px;top:176px" width="18" height="12" viewBox="0 0 18 12"><path d="M1.5 1.5L9 9L16.5 1.5" fill="none" stroke="#6e6e6e" stroke-width="2.6"/></svg>
<div class="r" style="left:1408px;top:376px;width:28px;height:4px;background:#d09bff;"></div>
<div class="r" style="left:482px;top:1062px;width:954px;height:2px;background:#e6e6e6;"></div>
<div class="r" style="left:482px;top:1064px;width:954px;height:42px;background:#f2f2f2;"></div>
<div class="t" style="left:599.39px;top:1074.26px;font:24.5px/24.5px 'Liberation Sans',sans-serif;letter-spacing:1.396px;color:#555;">Herbivorae</div>
<svg class="r" style="left:754px;top:1079px" width="8" height="13" viewBox="0 0 8 13"><path d="M1 1L6.5 6.5L1 12" fill="none" stroke="#a4a4a4" stroke-width="1.5"/></svg>
<div class="t" style="left:779.87px;top:1074.26px;font:24.5px/24.5px 'Liberation Sans',sans-serif;letter-spacing:0.945px;color:#555;">meal()</div>
<div class="r" style="left:1118px;top:1066px;width:318px;height:40px;background:#7ec7e4;"></div>
<div class="t" style="left:1135.33px;top:1073.97px;font:26.5px/26.5px 'Liberation Sans',sans-serif;letter-spacing:1.770px;color:#111;">Followed by jetbrains</div>
<div class="r" style="left:1436px;top:102px;width:2px;height:1004px;background:#d1d1d1;"></div>
<div class="r" style="left:1438px;top:102px;width:760px;height:52px;background:#f2f2f2;"></div>
<div class="r" style="left:1438px;top:154px;width:760px;height:2px;background:#d1d1d1;"></div>
<div class="t" style="left:1449.73px;top:117.09px;font:25px/25px 'Liberation Sans',sans-serif;letter-spacing:1.268px;color:#1e1e1e;">Code With Me:</div>
<div class="t" style="left:1667.73px;top:117.09px;font:25px/25px 'Liberation Sans',sans-serif;letter-spacing:1.215px;color:#1e1e1e;">Chat</div>
<div class="r" style="left:1644px;top:150px;width:106px;height:5px;background:#a2adbe;"></div>
<svg class="r" style="left:2107px;top:115px" width="26" height="27" viewBox="0 0 26 27"><g transform="translate(13 13.5)"><path d="M-2.6 -13h5.2l0.7 3.3a10 10 0 0 1 3 1.7l3.2-1.1 2.6 4.5-2.5 2.2a10 10 0 0 1 0 3.5l2.5 2.2-2.6 4.5-3.2-1.1a10 10 0 0 1-3 1.7l-0.7 3.3h-5.2l-0.7-3.3a10 10 0 0 1-3-1.7l-3.2 1.1-2.6-4.5 2.5-2.2a10 10 0 0 1 0-3.5l-2.5-2.2 2.6-4.5 3.2 1.1a10 10 0 0 1 3-1.7z" fill="#777"/><circle r="4.6" fill="#f2f2f2"/></g></svg>
<div class="r" style="left:2160px;top:126px;width:24px;height:4.5px;background:#777;"></div>
<div class="r" style="left:1438px;top:156px;width:760px;height:950px;background:linear-gradient(#222 0%,#2f2f2f 6.7%,#3d3d3d 14%,#444 21%,#484848 29%,#484848 67%,#444 71%,#3a3a3a 76%,#2c2c2c 81%,#232323 85%,#1f1f1f 92%,#1c1c1c 100%)"></div>
<div class="t" style="left:1717.64px;top:211.93px;font:36px/36px 'Liberation Sans',sans-serif;letter-spacing:-0.619px;color:#fff;-webkit-text-stroke:0.5px #fff;">Jetbrains ...</div>
<div class="r" style="left:1617.5px;top:431px;width:401px;height:401px;border-radius:50%;background:#937a5a"></div>
<svg class="r" style="left:1770px;top:560px" width="90" height="162" viewBox="0 0 90 162"><path d="M81.7 1.5V113A39 39 0 0 1 4 116" fill="none" stroke="#d6cfc8" stroke-width="5"/></svg>
<svg class="r" style="left:1493px;top:1029px" width="23" height="23" viewBox="0 0 23 23"><path d="M2.1 19V3.1Q2.1 2.1 3.1 2.1H18.9Q19.9 2.1 19.9 3.1V14.9Q19.9 15.9 18.9 15.9H5.5Z" fill="none" stroke="#fff" stroke-width="2.2" stroke-linejoin="round"/></svg>
<svg class="r" style="left:1562px;top:1029px" width="25" height="27" viewBox="0 0 25 27"><g fill="#fff"><rect x="7.9" y="3.3" width="3.1" height="12" rx="1.5"/><rect x="11.9" y="0.8" width="3.1" height="14" rx="1.5"/><rect x="15.9" y="1.8" width="3.1" height="13" rx="1.5"/><rect x="20" y="4.9" width="2.9" height="11" rx="1.4"/><path d="M7.9 12H22.9V20.2A5 5 0 0 1 17.9 25.2H13.5A5 5 0 0 1 10 23.8L1.2 15.3A1.8 1.8 0 0 1 4.2 13.3L7.9 16.2Z"/></g></svg>
<div class="r" style="left:1708px;top:1022px;width:36px;height:36px;border-radius:50%;background:#fff;border:2px solid #cbd6e6"></div>
<svg class="r" style="left:1718px;top:1030px" width="20" height="22" viewBox="0 0 20 22"><rect x="7.1" y="2" width="5.7" height="11.7" rx="2.85" fill="#5f7082"/><path d="M3.9 11A6.05 6.05 0 0 0 16 11" fill="none" stroke="#5f7082" stroke-width="1.8"/><rect x="9.3" y="16.5" width="2.4" height="4.4" fill="#5f7082"/></svg>
<div class="r" style="left:1796px;top:1022px;width:44px;height:44px;border-radius:50%;background:#c0201d"></div>
<svg class="r" style="left:1805px;top:1038px" width="26" height="12" viewBox="0 0 26 12"><path d="M0.6 6.5Q12.8 -4.5 25 6.5L21 10.2L17.2 7.6V4.9Q12.8 2.2 8.4 4.9V7.6L4.6 10.2Z" fill="#fff"/></svg>
<div class="r" style="left:1888px;top:1022px;width:36px;height:36px;border-radius:50%;background:#2a3a51;border:2px solid #5b6e82"></div>
<svg class="r" style="left:1895px;top:1030px" width="26" height="23" viewBox="0 0 26 23"><path d="M3.75 6H18V18.2H3.75Z" fill="#fff"/><path d="M17.5 10L22.2 6.6V17.6L17.5 14.5Z" fill="#fff"/><path d="M3 2L22 20.8" stroke="#2a3a51" stroke-width="4.2"/><path d="M3 2L22 20.8" stroke="#fff" stroke-width="1.8"/></svg>
<svg class="r" style="left:2120px;top:1028px" width="25" height="25" viewBox="0 0 25 25"><rect x="1.2" y="1.2" width="8.8" height="8.8" rx="2" fill="none" stroke="#fff" stroke-width="2.4"/><rect x="15" y="1.2" width="8.8" height="8.8" rx="2" fill="none" stroke="#fff" stroke-width="2.4"/><rect x="1.2" y="15" width="8.8" height="8.8" rx="2" fill="none" stroke="#fff" stroke-width="2.4"/><rect x="15" y="15" width="8.8" height="8.8" rx="2" fill="none" stroke="#fff" stroke-width="2.4"/></svg>
<div class="r" style="left:2198px;top:102px;width:2px;height:1006px;background:#d1d1d1;"></div>
<div class="r" style="left:2200px;top:102px;width:40px;height:1006px;background:#f2f2f2;"></div>
<div class="r" style="left:2198px;top:904px;width:42px;height:202px;background:#bebebe;"></div>
<svg class="r" style="left:2210px;top:125px" width="18" height="23" viewBox="0 0 18 23"><rect x="0" y="0" width="18" height="6" fill="#6e6e6e"/><rect x="0" y="8.5" width="18" height="6" fill="#6e6e6e"/><rect x="0" y="17" width="18" height="6" fill="#6e6e6e"/><rect x="2" y="2" width="3" height="2" fill="#f2f2f2"/><rect x="2" y="10.5" width="3" height="2" fill="#f2f2f2"/><rect x="2" y="19" width="3" height="2" fill="#f2f2f2"/></svg>
<div class="t" style="left:2230.72px;top:157.14px;font:22.7px/22.7px 'Liberation Sans',sans-serif;letter-spacing:1.356px;color:#000;transform-origin:0 0;transform:rotate(90deg)">Remote Host</div>
<svg class="r" style="left:2207px;top:350px" width="24" height="25" viewBox="0 0 24 25"><ellipse cx="12" cy="4" rx="11" ry="3.6" fill="#6e6e6e"/><path d="M1 7.5Q12 12 23 7.5V11.5Q12 16 1 11.5Z M1 14.5Q12 19 23 14.5V18.5Q12 23 1 18.5Z" fill="#6e6e6e"/></svg>
<div class="t" style="left:2230.72px;top:384.14px;font:22.7px/22.7px 'Liberation Sans',sans-serif;letter-spacing:0.957px;color:#000;transform-origin:0 0;transform:rotate(90deg)">Database</div>
<svg class="r" style="left:2208px;top:537px" width="22" height="20" viewBox="0 0 22 20"><g fill="#6e6e6e"><rect x="0" y="0" width="4" height="4"/><rect x="6" y="0" width="4" height="4"/><rect x="12" y="0" width="4" height="4"/><rect x="18" y="0" width="4" height="4"/><rect x="0" y="6" width="4" height="8"/><rect x="6" y="6" width="10" height="8"/><rect x="18" y="6" width="4" height="8"/><rect x="0" y="16" width="4" height="4"/><rect x="6" y="16" width="4" height="4"/><rect x="12" y="16" width="4" height="4"/><rect x="18" y="16" width="4" height="4"/></g></svg>
<div class="t" style="left:2230.72px;top:567.97px;font:22.7px/22.7px 'Liberation Sans',sans-serif;letter-spacing:0.873px;color:#000;transform-origin:0 0;transform:rotate(90deg)">SciView</div>
<div class="t" style="left:2230.72px;top:926.85px;font:22.7px/22.7px 'Liberation Sans',sans-serif;letter-spacing:1.268px;color:#000;transform-origin:0 0;transform:rotate(90deg)">Code With Me</div>
<div class="r" style="left:0px;top:1106px;width:2240px;height:2px;background:#d1d1d1;"></div>
<div class="r" style="left:0px;top:1108px;width:2240px;height:40px;background:#f2f2f2;"></div>
<div class="r" style="left:0px;top:1148px;width:2240px;height:2px;background:#d1d1d1;"></div>
<svg class="r" style="left:64px;top:1117px" width="22" height="22" viewBox="0 0 22 22"><circle cx="11" cy="11" r="10.5" fill="#6e6e6e"/><rect x="9.2" y="4" width="3.6" height="9.5" fill="#fff"/><rect x="9.2" y="14.8" width="3.6" height="3.2" fill="#fff"/></svg>
<div class="t" style="left:95.96px;top:1117.54px;font:22.4px/22.4px 'Liberation Sans',sans-serif;letter-spacing:1.220px;color:#000;">Problems</div>
<svg class="r" style="left:244px;top:1118px" width="22" height="20" viewBox="0 0 22 20"><rect x="0" y="0" width="22" height="20" fill="#6e6e6e"/><path d="M3.5 4L8 8L3.5 12" fill="none" stroke="#fff" stroke-width="1.6"/><rect x="9" y="14" width="8" height="1.8" fill="#fff"/></svg>
<div class="t" style="left:276.30px;top:1117.54px;font:22.4px/22.4px 'Liberation Sans',sans-serif;letter-spacing:1.225px;color:#000;">Terminal</div>
<svg class="r" style="left:414px;top:1116px" width="24" height="24" viewBox="0 0 24 24"><path d="M21 5.5C17 1.5 8 0.8 3.5 6C0 10 1 16 7.8 19C5 16 4.5 13 6 10C8.5 6 15 5 21 5.5Z" fill="#6e6e6e"/><path d="M10.1 8.1H18C21 8.1 22.7 10 22.7 12.6C22.7 14.8 21.5 16.2 19.8 16.8L23 22H18.8L16 17.2H13.9V22H10.1Z M13.9 11.2V14.6H17.8C18.8 14.6 19.3 13.9 19.3 12.9C19.3 11.9 18.8 11.2 17.8 11.2Z" fill="#6e6e6e" fill-rule="evenodd"/></svg>
<div class="t" style="left:447.46px;top:1117.54px;font:22.4px/22.4px 'Liberation Sans',sans-serif;letter-spacing:1.246px;color:#000;">R Jobs</div>
<svg class="r" style="left:566px;top:1119px" width="21" height="19" viewBox="0 0 21 19"><g fill="#6e6e6e"><rect x="0" y="0" width="3.5" height="3.5"/><rect x="5.5" y="0" width="15" height="3.5"/><rect x="0" y="7.5" width="3.5" height="3.5"/><rect x="5.5" y="7.5" width="15" height="3.5"/><rect x="0" y="15" width="3.5" height="3.5"/><rect x="5.5" y="15" width="15" height="3.5"/></g></svg>
<div class="t" style="left:596.50px;top:1117.54px;font:22.4px/22.4px 'Liberation Sans',sans-serif;letter-spacing:-0.277px;color:#000;">TODO</div>
<svg class="r" style="left:704px;top:1116px" width="24" height="24" viewBox="0 0 24 24"><path d="M21 5.5C17 1.5 8 0.8 3.5 6C0 10 1 16 7.8 19C5 16 4.5 13 6 10C8.5 6 15 5 21 5.5Z" fill="#6e6e6e"/><path d="M10.1 8.1H18C21 8.1 22.7 10 22.7 12.6C22.7 14.8 21.5 16.2 19.8 16.8L23 22H18.8L16 17.2H13.9V22H10.1Z M13.9 11.2V14.6H17.8C18.8 14.6 19.3 13.9 19.3 12.9C19.3 11.9 18.8 11.2 17.8 11.2Z" fill="#6e6e6e" fill-rule="evenodd"/></svg>
<div class="t" style="left:737.16px;top:1117.54px;font:22.4px/22.4px 'Liberation Sans',sans-serif;letter-spacing:1.156px;color:#000;">R Console</div>
<svg class="r" style="left:901px;top:1116px" width="24" height="24" viewBox="0 0 24 24"><path d="M11 1h3a4 4 0 0 1 4 4v6H10a3 3 0 0 0-3 3v2H5a4 4 0 0 1-4-4V9a4 4 0 0 1 4-4h5V4h-2V4a3 3 0 0 1 3-3z" fill="#6e6e6e"/><path d="M13 23h-3a4 4 0 0 1-4-4v-2h2v0h-0V14a2 2 0 0 1 2-2h8V8h1a4 4 0 0 1 4 4v3a4 4 0 0 1-4 4h-5v1h2a3 3 0 0 1-3 3z" fill="#6e6e6e"/></svg>
<div class="t" style="left:933.36px;top:1117.54px;font:22.4px/22.4px 'Liberation Sans',sans-serif;letter-spacing:1.191px;color:#000;">Python Console</div>
<svg class="r" style="left:1154px;top:1116px" width="26" height="24" viewBox="0 0 26 24"><path d="M6.5 0H19.5L26 12L19.5 24H6.5L0 12Z" fill="#6e6e6e"/><path d="M10 6.5L18 12L10 17.5Z" fill="#fff"/></svg>
<div class="t" style="left:1187.68px;top:1117.54px;font:22.4px/22.4px 'Liberation Sans',sans-serif;letter-spacing:1.462px;color:#000;">Services</div>
<svg class="r" style="left:2032px;top:1116px" width="26" height="26" viewBox="0 0 26 26"><path d="M13 0A13 13 0 0 1 26 13V25.8H13A13 13 0 0 1 0 13A13 13 0 0 1 13 0Z" fill="#58a96a"/></svg>
<svg class="r" style="left:2040px;top:1122px" width="9" height="14" viewBox="0 0 9 14"><path d="M1 3.3L4.8 0.3H7.3V13.5H4.2V4.2L2.3 5.6Z" fill="#fff"/></svg>
<div class="t" style="left:2066.06px;top:1117.54px;font:22.4px/22.4px 'Liberation Sans',sans-serif;letter-spacing:1.276px;color:#000;">Event Log</div>
<div class="r" style="left:0px;top:1150px;width:2240px;height:40px;background:#f2f2f2;"></div>
<svg class="r" style="left:12px;top:1158px" width="24" height="24" viewBox="0 0 24 24"><path d="M6 1.2H22.8V18H6Z" fill="none" stroke="#6e6e6e" stroke-width="2"/><path d="M1.2 5V22.8H19" fill="none" stroke="#6e6e6e" stroke-width="2"/></svg>
<div class="t" style="left:62.26px;top:1159.84px;font:22.4px/22.4px 'Liberation Sans',sans-serif;letter-spacing:1.495px;color:#000;">Code With Me: jetbrains joined (38 minutes ago)</div>
<div class="t" style="left:1090.41px;top:1159.84px;font:22.4px/22.4px 'Liberation Sans',sans-serif;letter-spacing:1.391px;color:#000;">(D)</div>
<svg class="r" style="left:1137px;top:1163.5px" width="14" height="15" viewBox="0 0 14 15"><path d="M7 1.2V14.5M1.2 7L7 1.2L12.8 7" fill="none" stroke="#000" stroke-width="1.7"/></svg>
<div class="t" style="left:1153.87px;top:1159.84px;font:22.4px/22.4px 'Liberation Sans',sans-serif;letter-spacing:1.854px;color:#000;">28 B/s /</div>
<svg class="r" style="left:1252.5px;top:1163.5px" width="14" height="15" viewBox="0 0 14 15"><path d="M7 0.5V13.8M1.2 8L7 13.8L12.8 8" fill="none" stroke="#000" stroke-width="1.7"/></svg>
<div class="t" style="left:1269.85px;top:1159.84px;font:22.4px/22.4px 'Liberation Sans',sans-serif;letter-spacing:1.552px;color:#000;">36 B/s</div>
<div class="t" style="left:1366.10px;top:1159.84px;font:22.4px/22.4px 'Liberation Sans',sans-serif;letter-spacing:2.609px;color:#000;">5:9</div>
<div class="t" style="left:1425.16px;top:1159.84px;font:22.4px/22.4px 'Liberation Sans',sans-serif;letter-spacing:1.394px;color:#000;">LF</div>
<div class="t" style="left:1477.27px;top:1159.84px;font:22.4px/22.4px 'Liberation Sans',sans-serif;letter-spacing:2.386px;color:#000;">UTF-8</div>
<div class="t" style="left:1574.49px;top:1159.84px;font:22.4px/22.4px 'Liberation Sans',sans-serif;letter-spacing:1.867px;color:#000;">4 spaces</div>
<div class="t" style="left:1700.66px;top:1159.84px;font:22.4px/22.4px 'Liberation Sans',sans-serif;letter-spacing:1.413px;color:#000;">Python 3.8 (CodeInsights2019-2)</div>
<svg class="r" style="left:2093px;top:1157px" width="24" height="24" viewBox="0 0 24 24"><path d="M2.35 10.8V6.3A4.65 4.65 0 0 1 11.65 6.3V11" fill="none" stroke="#6e6e6e" stroke-width="2.7"/><rect x="7" y="11" width="16" height="11.7" fill="#6e6e6e"/></svg>
<svg class="r" style="left:2139px;top:1155px" width="34" height="32" viewBox="0 0 34 32"><path d="M7.5 20.6A7.2 7.2 0 0 1 6.5 6.3A8.8 8.8 0 0 1 23 7.2A7 7 0 0 1 24.8 20.6Z" fill="#6e6e6e"/><path d="M11.5 6.5Q12 3 15.5 3Q19 3 19 6.3Q19 8.5 16.5 10Q15.2 11 15.2 13V14.2" fill="none" stroke="#f2f2f2" stroke-width="2.3"/><rect x="14" y="15.8" width="2.5" height="2.4" fill="#f2f2f2"/><circle cx="26" cy="23.75" r="9" fill="#f2f2f2"/><g transform="translate(26 23.75)" fill="#6e6e6e"><circle r="4.6"/><rect x="-1.5" y="-6.6" width="3" height="13.2"/><rect x="-1.5" y="-6.6" width="3" height="13.2" transform="rotate(60)"/><rect x="-1.5" y="-6.6" width="3" height="13.2" transform="rotate(120)"/></g><circle cx="26" cy="23.75" r="2.2" fill="#f2f2f2"/></svg>
<svg class="r" style="left:2192px;top:1158px" width="24" height="24" viewBox="0 0 24 24"><circle cx="12" cy="12" r="12" fill="#c4c4c4"/><rect x="9.9" y="4.2" width="4.35" height="9.4" fill="#f2f2f2"/><rect x="9.9" y="16" width="4.35" height="3.8" fill="#f2f2f2"/></svg>
</body></html>
